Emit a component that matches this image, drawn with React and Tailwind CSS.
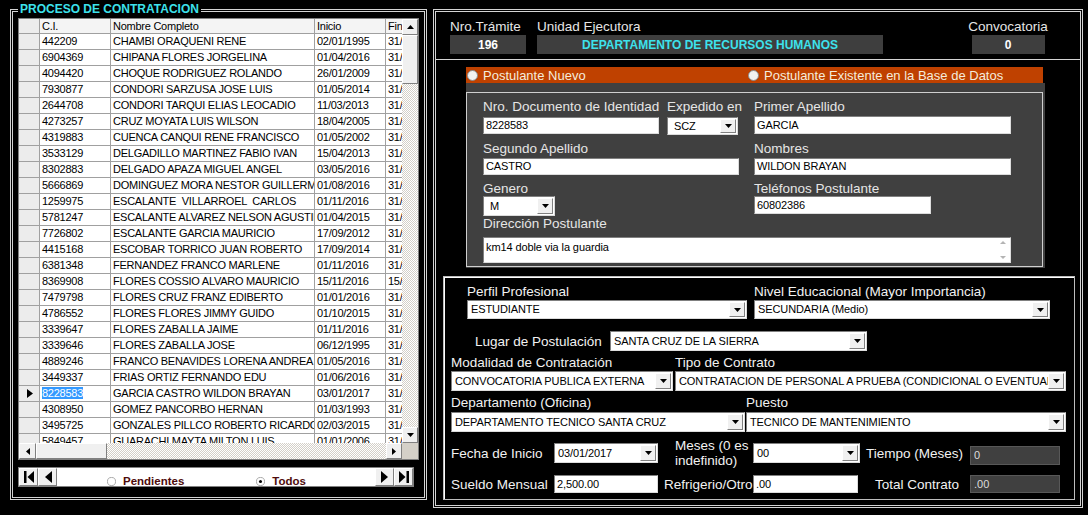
import React from 'react';

const rows = [
  ['442209', 'CHAMBI ORAQUENI RENE', '02/01/1995', '31/12/2016'],
  ['6904369', 'CHIPANA FLORES JORGELINA', '01/04/2016', '31/12/2016'],
  ['4094420', 'CHOQUE RODRIGUEZ ROLANDO', '26/01/2009', '31/12/2016'],
  ['7930877', 'CONDORI SARZUSA JOSE LUIS', '01/05/2014', '31/12/2016'],
  ['2644708', 'CONDORI TARQUI ELIAS LEOCADIO', '11/03/2013', '31/12/2016'],
  ['4273257', 'CRUZ MOYATA LUIS WILSON', '18/04/2005', '31/12/2016'],
  ['4319883', 'CUENCA CANQUI RENE FRANCISCO', '01/05/2002', '31/12/2016'],
  ['3533129', 'DELGADILLO MARTINEZ FABIO IVAN', '15/04/2013', '31/12/2016'],
  ['8302883', 'DELGADO APAZA MIGUEL ANGEL', '03/05/2016', '31/12/2016'],
  ['5666869', 'DOMINGUEZ MORA NESTOR GUILLERMO', '01/08/2016', '31/12/2016'],
  ['1259975', 'ESCALANTE  VILLARROEL  CARLOS', '01/11/2016', '31/12/2016'],
  ['5781247', 'ESCALANTE ALVAREZ NELSON AGUSTIN', '01/04/2015', '31/12/2016'],
  ['7726802', 'ESCALANTE GARCIA MAURICIO', '17/09/2012', '31/12/2016'],
  ['4415168', 'ESCOBAR TORRICO JUAN ROBERTO', '17/09/2014', '31/12/2016'],
  ['6381348', 'FERNANDEZ FRANCO MARLENE', '01/11/2016', '31/12/2016'],
  ['8369908', 'FLORES COSSIO ALVARO MAURICIO', '15/11/2016', '15/11/2017'],
  ['7479798', 'FLORES CRUZ FRANZ EDIBERTO', '01/01/2016', '31/12/2016'],
  ['4786552', 'FLORES FLORES JIMMY GUIDO', '01/10/2015', '31/12/2016'],
  ['3339647', 'FLORES ZABALLA JAIME', '01/11/2016', '31/12/2016'],
  ['3339646', 'FLORES ZABALLA JOSE', '06/12/1995', '31/12/2016'],
  ['4889246', 'FRANCO BENAVIDES LORENA ANDREA', '01/05/2016', '31/12/2016'],
  ['3449337', 'FRIAS ORTIZ FERNANDO EDU', '01/06/2016', '31/12/2016'],
  ['8228583', 'GARCIA CASTRO WILDON BRAYAN', '03/01/2017', '31/12/2017'],
  ['4308950', 'GOMEZ PANCORBO HERNAN', '01/03/1993', '31/12/2016'],
  ['3495725', 'GONZALES PILLCO ROBERTO RICARDO', '02/03/2015', '31/12/2016'],
  ['5849457', 'GUARACHI MAYTA MILTON LUIS', '01/01/2006', '31/12/2016'],
];

const raised = 'bg-[#f0f0f0] border border-t-white border-l-white border-r-[#808080] border-b-[#808080]';
const sunken = 'bg-white border border-t-[#808080] border-l-[#808080] border-r-[#dcdcdc] border-b-[#dcdcdc]';
const txt = 'text-[11px] tracking-[-0.25px] text-black';
const ftxt = 'text-[11px] tracking-[-0.1px] text-black';
const lbl = 'text-[13.5px] leading-[15px] text-[#e6e6e6] whitespace-nowrap';
const glbl = 'text-[13.5px] leading-[15px] text-[#f2f2f2] whitespace-nowrap';

const Tri = ({ dir, className = 'w-[7px] h-[4px]', color = 'currentColor' }) => {
  const map = {
    down: ['0 0 8 4', '0,0 8,0 4,4'],
    up: ['0 0 8 4', '0,4 8,4 4,0'],
    left: ['0 0 4 8', '4,0 4,8 0,4'],
    right: ['0 0 4 8', '0,0 0,8 4,4'],
  };
  const [vb, pts] = map[dir];
  return (
    <svg viewBox={vb} preserveAspectRatio="none" className={className}>
      <polygon points={pts} fill={color} />
    </svg>
  );
};

const Combo = ({ value, className = '' }) => (
  <div className={`${sunken} flex items-stretch p-[1px] ${className}`}>
    <div className={`flex-1 min-w-0 overflow-hidden whitespace-pre pl-[2px] flex items-center ${ftxt}`}>{value}</div>
    <div className={`${raised} w-[16px] shrink-0 flex items-center justify-center text-black`}>
      <Tri dir="down" />
    </div>
  </div>
);

const Input = ({ value, className = '' }) => (
  <div className={`${sunken} flex items-center pl-[2px] overflow-hidden whitespace-pre ${ftxt} ${className}`}>{value}</div>
);

const ReadBox = ({ value, className = '' }) => (
  <div className={`bg-[#404040] border border-[#585858] flex items-center pl-[3px] text-[11px] text-[#dcdcdc] ${className}`}>{value}</div>
);

const Dot = ({ className = '' }) => (
  <svg viewBox="0 0 11 11" className={`w-[11px] h-[11px] shrink-0 ${className}`}>
    <circle cx="5.5" cy="5.5" r="5" fill="#f2f2f2" stroke="#8a8a8a" strokeWidth="1" />
  </svg>
);

const NavRadio = ({ checked }) => (
  <svg viewBox="0 0 10 10" className="w-[9px] h-[9px] shrink-0 mt-[2px]">
    <circle cx="5" cy="5" r="4.5" fill="#ffffff" stroke="#a0a0a0" strokeWidth="1" />
    {checked && <circle cx="5" cy="5" r="1.7" fill="#000" />}
  </svg>
);

function VScroll() {
  return (
    <div className="w-[16px] shrink-0 flex flex-col [background-image:repeating-conic-gradient(#d4d0c8_0_25%,#ffffff_0_50%)] [background-size:2px_2px]">
      <div className={`${raised} h-[16px] flex items-center justify-center text-black`}><Tri dir="up" /></div>
      <div className={`${raised} h-[49px]`} />
      <div className="flex-1" />
      <div className={`${raised} h-[16px] flex items-center justify-center text-black`}><Tri dir="down" /></div>
    </div>
  );
}

function HScroll() {
  return (
    <div className="h-[16px] shrink-0 flex [background-image:repeating-conic-gradient(#d4d0c8_0_25%,#ffffff_0_50%)] [background-size:2px_2px]">
      <div className={`${raised} w-[17px] flex items-center justify-center text-black`}><Tri dir="left" className="w-[4px] h-[7px]" /></div>
      <div className={`${raised} w-[71px]`} />
      <div className="flex-1" />
      <div className={`${raised} w-[16px] flex items-center justify-center text-black`}><Tri dir="right" className="w-[4px] h-[7px]" /></div>
      <div className="w-[16px] bg-[#d4d0c8]" />
    </div>
  );
}

function Grid() {
  const cell = 'shrink-0 border-r border-b border-[#a0a0a0] overflow-hidden whitespace-pre pl-[2px]';
  return (
    <div className="w-[401px] h-[442px] shrink-0 border border-[#808080] bg-white flex flex-col">
      <div className="flex h-[424px]">
        <div className={`flex-1 min-w-0 overflow-hidden ${txt}`}>
          <div className="flex h-[15px] leading-[14px] bg-[#f4f4f4]">
            <div className={`${cell} w-[21px] bg-[#ececec]`} />
            <div className={`${cell} w-[71px]`}>C.I.</div>
            <div className={`${cell} w-[204px]`}>Nombre Completo</div>
            <div className={`${cell} w-[71px]`}>Inicio</div>
            <div className="flex-1 min-w-0 border-b border-[#a0a0a0] overflow-hidden whitespace-pre pl-[2px]">Fin</div>
          </div>
          {rows.map(([ci, name, ini, fin]) => {
            const sel = ci === '8228583';
            return (
              <div key={ci} className="flex h-[16px] leading-[15px]">
                <div className={`${cell} w-[21px] bg-[#ececec] flex items-center justify-center`}>
                  {sel && <Tri dir="right" className="w-[6px] h-[9px]" color="#000" />}
                </div>
                <div className={`${cell} w-[71px]`}>
                  <span className={sel ? 'bg-[#3399ff] text-white' : ''}>{ci}</span>
                </div>
                <div className={`${cell} w-[204px]`}>{name}</div>
                <div className={`${cell} w-[71px]`}>{ini}</div>
                <div className="flex-1 min-w-0 border-b border-[#a0a0a0] overflow-hidden whitespace-pre pl-[2px]">{fin}</div>
              </div>
            );
          })}
        </div>
        <VScroll />
      </div>
      <HScroll />
    </div>
  );
}

function NavBar() {
  const btn = `${raised} w-[19px] shrink-0 flex items-center justify-center`;
  return (
    <div className="mt-[7px] w-[396px] h-[20px] shrink-0 bg-white border border-[#808080] flex items-stretch">
      <div className={btn}>
        <svg viewBox="0 0 10 12" className="w-[10px] h-[12px]"><rect x="0" y="0" width="2.5" height="12" fill="#000" /><polygon points="10,0 10,12 3.5,6" fill="#000" /></svg>
      </div>
      <div className={btn}>
        <svg viewBox="0 0 8 12" className="w-[8px] h-[12px]"><polygon points="8,0 8,12 1,6" fill="#000" /></svg>
      </div>
      <div className="flex-1 flex items-start pt-[7px] text-[11.5px] leading-[12px] font-bold text-[#4e0b0b]">
        <div className="ml-[50px] flex"><NavRadio /></div>
        <span className="ml-[7px]">Pendientes</span>
        <div className="ml-[72px] flex"><NavRadio checked /></div>
        <span className="ml-[7px]">Todos</span>
      </div>
      <div className={btn}>
        <svg viewBox="0 0 8 12" className="w-[8px] h-[12px]"><polygon points="0,0 0,12 7,6" fill="#000" /></svg>
      </div>
      <div className={btn}>
        <svg viewBox="0 0 10 12" className="w-[10px] h-[12px]"><polygon points="0,0 0,12 6.5,6" fill="#000" /><rect x="7.5" y="0" width="2.5" height="12" fill="#000" /></svg>
      </div>
    </div>
  );
}

function LeftPanel() {
  return (
    <div className="relative w-[417px] h-[491px] shrink-0 border-[3px] border-double border-[#d4d4d4] pl-[5px] pt-[6px] flex flex-col">
      <div className="absolute left-[5px] -top-[10px] bg-black px-[2px] text-[12px] leading-[14px] font-bold text-[#3de2ec]">
        PROCESO DE CONTRATACION
      </div>
      <Grid />
      <NavBar />
    </div>
  );
}

function Postulante() {
  return (
    <div className="mt-[7px] ml-[30px] w-[579px] shrink-0 flex flex-col">
      <div className="h-[16px] w-[577px] bg-[#bf4100] flex items-center text-[13px] leading-[15px] text-[#f5ecdc] whitespace-nowrap">
        <div className="w-[282px] flex items-center">
          <Dot className="ml-[1px]" />
          <span className="ml-[5px]">Postulante Nuevo</span>
        </div>
        <Dot />
        <span className="ml-[5px]">Postulante Existente en la Base de Datos</span>
      </div>
      <div className="h-[185px] bg-[#404040] pt-[9px]">
        <div className="w-[577px] h-[175px] border border-[#cfcfcf] pl-[16px] pt-[6px] flex flex-col">
          <div className="flex">
            <div className="w-[256px] flex">
              <div className="w-[176px] flex flex-col">
                <div className={lbl}>Nro. Documento de Identidad</div>
                <Input value="8228583" className="mt-[3px] h-[17px]" />
              </div>
              <div className="ml-[8px] w-[71px] flex flex-col">
                <div className={lbl}>Expedido en</div>
                <Combo value=" SCZ" className="mt-[3px] h-[18px]" />
              </div>
            </div>
            <div className="ml-[15px] w-[257px] flex flex-col">
              <div className={lbl}>Primer Apellido</div>
              <Input value="GARCIA" className="mt-[2px] h-[18px]" />
            </div>
          </div>
          <div className="flex mt-[6px]">
            <div className="w-[256px] flex flex-col">
              <div className={lbl}>Segundo Apellido</div>
              <Input value="CASTRO" className="mt-[2px] h-[17px]" />
            </div>
            <div className="ml-[15px] w-[257px] flex flex-col">
              <div className={lbl}>Nombres</div>
              <Input value="WILDON BRAYAN" className="mt-[2px] h-[17px]" />
            </div>
          </div>
          <div className="flex mt-[6px]">
            <div className="w-[256px] flex flex-col">
              <div className={lbl}>Genero</div>
              <Combo value=" M" className="w-[72px] h-[20px]" />
            </div>
            <div className="ml-[15px] w-[257px] flex flex-col">
              <div className={lbl}>Teléfonos Postulante</div>
              <Input value="60802386" className="w-[177px] h-[18px]" />
            </div>
          </div>
          <div className={lbl}>Dirección Postulante</div>
          <div className={`${sunken} mt-[6px] w-[528px] h-[26px] flex`}>
            <div className={`flex-1 pl-[2px] pt-[2px] leading-[14px] ${ftxt}`}>km14 doble via la guardia</div>
            <div className="w-[14px] flex flex-col items-center justify-between py-[3px] text-[#b4b4b4]">
              <Tri dir="up" className="w-[6px] h-[3px]" />
              <Tri dir="down" className="w-[6px] h-[3px]" />
            </div>
          </div>
        </div>
      </div>
    </div>
  );
}

function Contrato() {
  return (
    <div className="mt-[8px] ml-[7px] w-[632px] h-[224px] shrink-0 border border-[#bdbdbd] shadow-[inset_1px_1px_0_#ffffff] pt-[7px] flex flex-col">
      <div className="flex ml-[23px]">
        <div className="w-[280px] flex flex-col">
          <div className={glbl}>Perfil Profesional</div>
          <Combo value="ESTUDIANTE" className="mt-[1px] h-[19px]" />
        </div>
        <div className="ml-[7px] w-[296px] flex flex-col">
          <div className={glbl}>Nivel Educacional (Mayor Importancia)</div>
          <Combo value="SECUNDARIA (Medio)" className="mt-[1px] h-[19px]" />
        </div>
      </div>
      <div className="flex items-center ml-[31px] mt-[12px] h-[20px]">
        <div className={`${glbl} w-[135px]`}>Lugar de Postulación</div>
        <Combo value="SANTA CRUZ DE LA SIERRA" className="w-[257px] h-[20px]" />
      </div>
      <div className="flex ml-[7px] mt-[4px]">
        <div className="w-[222px] flex flex-col">
          <div className={glbl}>Modalidad de Contratación</div>
          <Combo value="CONVOCATORIA PUBLICA EXTERNA" className="mt-[1px] h-[20px]" />
        </div>
        <div className="ml-[2px] w-[391px] flex flex-col">
          <div className={glbl}>Tipo de Contrato</div>
          <Combo value="CONTRATACION DE PERSONAL A PRUEBA (CONDICIONAL O EVENTUAL)" className="mt-[1px] h-[20px]" />
        </div>
      </div>
      <div className="flex ml-[7px] mt-[4px]">
        <div className="w-[294px] flex flex-col">
          <div className={glbl}>Departamento (Oficina)</div>
          <Combo value="DEPARTAMENTO TECNICO SANTA CRUZ" className="mt-[2px] h-[20px]" />
        </div>
        <div className="ml-[1px] w-[320px] flex flex-col">
          <div className={glbl}>Puesto</div>
          <Combo value="TECNICO DE MANTENIMIENTO" className="mt-[2px] h-[20px]" />
        </div>
      </div>
      <div className="flex items-center ml-[7px] mt-[6px] h-[30px]">
        <div className={`${glbl} w-[103px]`}>Fecha de Inicio</div>
        <Combo value="03/01/2017" className="w-[104px] h-[20px]" />
        <div className="ml-[17px] w-[78px] text-[13.5px] leading-[15px] text-[#f2f2f2] whitespace-nowrap">Meses (0 es<br />indefinido)</div>
        <Combo value="00" className="w-[107px] h-[20px]" />
        <div className={`${glbl} ml-[6px] w-[104px]`}>Tiempo (Meses)</div>
        <ReadBox value="0" className="w-[90px] h-[19px] mt-[5px]" />
      </div>
      <div className="flex items-center ml-[7px] mt-[7px] h-[18px]">
        <div className={`${glbl} w-[103px]`}>Sueldo Mensual</div>
        <Input value="2,500.00" className="w-[104px] h-[18px]" />
        <div className={`${glbl} ml-[6px] w-[89px]`}>Refrigerio/Otro</div>
        <Input value=".00" className="w-[105px] h-[18px]" />
        <div className={`${glbl} ml-[17px] w-[95px]`}>Total Contrato</div>
        <ReadBox value=".00" className="w-[90px] h-[18px]" />
      </div>
    </div>
  );
}

function RightPanel() {
  return (
    <div className="w-[650px] h-[499px] shrink-0 border-[3px] border-double border-[#d4d4d4] flex flex-col">
      <div className="h-[48px] shrink-0 border-b border-[#d4d4d4] flex items-start pt-[7px] pl-[14px] pr-[32px]">
        <div className="w-[76px] flex flex-col">
          <div className={lbl}>Nro.Trámite</div>
          <div className="mt-[1px] h-[19px] bg-[#3e3e3e] flex items-center justify-center text-white font-bold text-[12px]">196</div>
        </div>
        <div className="ml-[11px] w-[346px] flex flex-col">
          <div className={lbl}>Unidad Ejecutora</div>
          <div className="mt-[1px] h-[19px] bg-[#3e3e3e] flex items-center justify-center text-[#3de2ec] font-bold text-[12px]">DEPARTAMENTO DE RECURSOS HUMANOS</div>
        </div>
        <div className="ml-auto w-[80px] flex flex-col items-center">
          <div className={lbl}>Convocatoria</div>
          <div className="mt-[1px] w-[73px] h-[19px] bg-[#3e3e3e] flex items-center justify-center text-white font-bold text-[12px]">0</div>
        </div>
      </div>
      <Postulante />
      <Contrato />
    </div>
  );
}

export default function App() {
  return (
    <div className="w-[1088px] h-[515px] bg-black flex items-start pl-[10px] pt-[9px] gap-[6px] overflow-hidden font-['Liberation_Sans',Arial,sans-serif]">
      <LeftPanel />
      <RightPanel />
    </div>
  );
}
